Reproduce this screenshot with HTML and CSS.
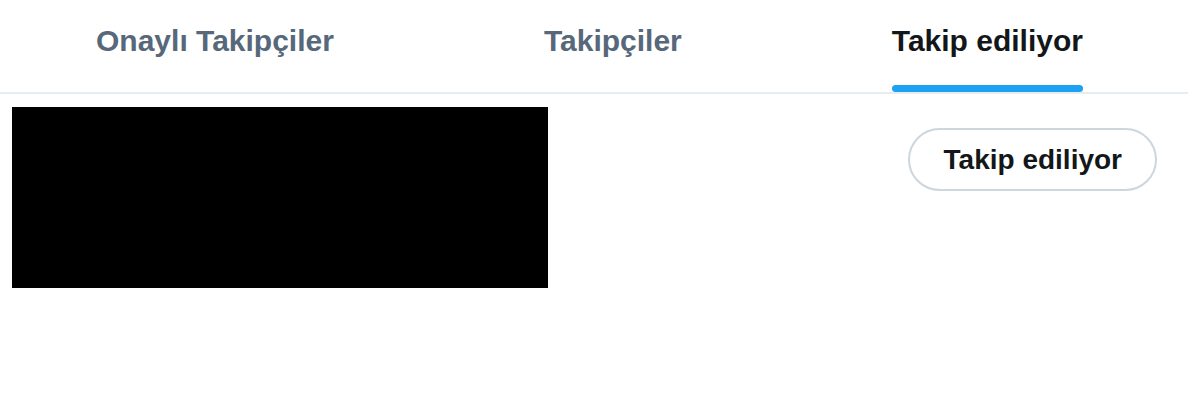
FILE: index.html
```html
<!DOCTYPE html>
<html lang="tr">
<head>
<meta charset="UTF-8" />
<meta name="viewport" content="width=device-width, initial-scale=1.0" />
<title>Takip ediliyor</title>
<link rel="stylesheet" href="styles.css">
</head>
<body>

<!-- Tabs -->
<nav class="tabs">
  <a class="tab" href="#"><span class="tab-label">Onaylı Takipçiler</span></a>
  <a class="tab" href="#"><span class="tab-label">Takipçiler</span></a>
  <a class="tab active" href="#"><span class="tab-label">Takip ediliyor<i class="tab-bar"></i></span></a>
</nav>

<!-- Account row -->
<div class="user-row">
  <div class="redacted"></div>
  <button class="follow-btn">Takip ediliyor</button>
</div>

</body>
</html>
```

FILE: styles.css
```css
:root {
  --text-dark: #14171a;
  --text-muted: #56687a;
  --accent-blue: #1da1f2;
  --line: #e6ecf0;
  --btn-border: #ccd6dd;
  --font-body: 'Liberation Sans', Arial, sans-serif;
}

body {
  margin: 0;
  font-family: var(--font-body);
  background: #fff;
  color: var(--text-dark);
}

.tabs {
  display: flex;
  height: 92px;
  margin-left: -9px;
  border-bottom: 2px solid var(--line);
}

.tab {
  flex: 1 1 auto;
  display: flex;
  justify-content: center;
  text-decoration: none;
  color: var(--text-muted);
  font-weight: bold;
  font-size: 30px;
}
.tab.active { color: var(--text-dark); }

.tab-label {
  display: flex;
  flex-direction: column;
  padding-top: 24px;
  line-height: 34px;
}

.tab-bar {
  margin-top: auto;
  height: 7px;
  border-radius: 4px;
  background: var(--accent-blue);
}

.user-row {
  display: flex;
  justify-content: space-between;
  align-items: flex-start;
  padding: 13px 31px 0 12px;
}

.redacted {
  width: 536px;
  height: 181px;
  background: #000;
}

.follow-btn {
  margin-top: 21px;
  height: 63px;
  padding: 0 33px 0 34px;
  border: 2px solid var(--btn-border);
  border-radius: 32px;
  background: #fff;
  color: var(--text-dark);
  font-family: var(--font-body);
  font-weight: bold;
  font-size: 28px;
  cursor: pointer;
}
```
